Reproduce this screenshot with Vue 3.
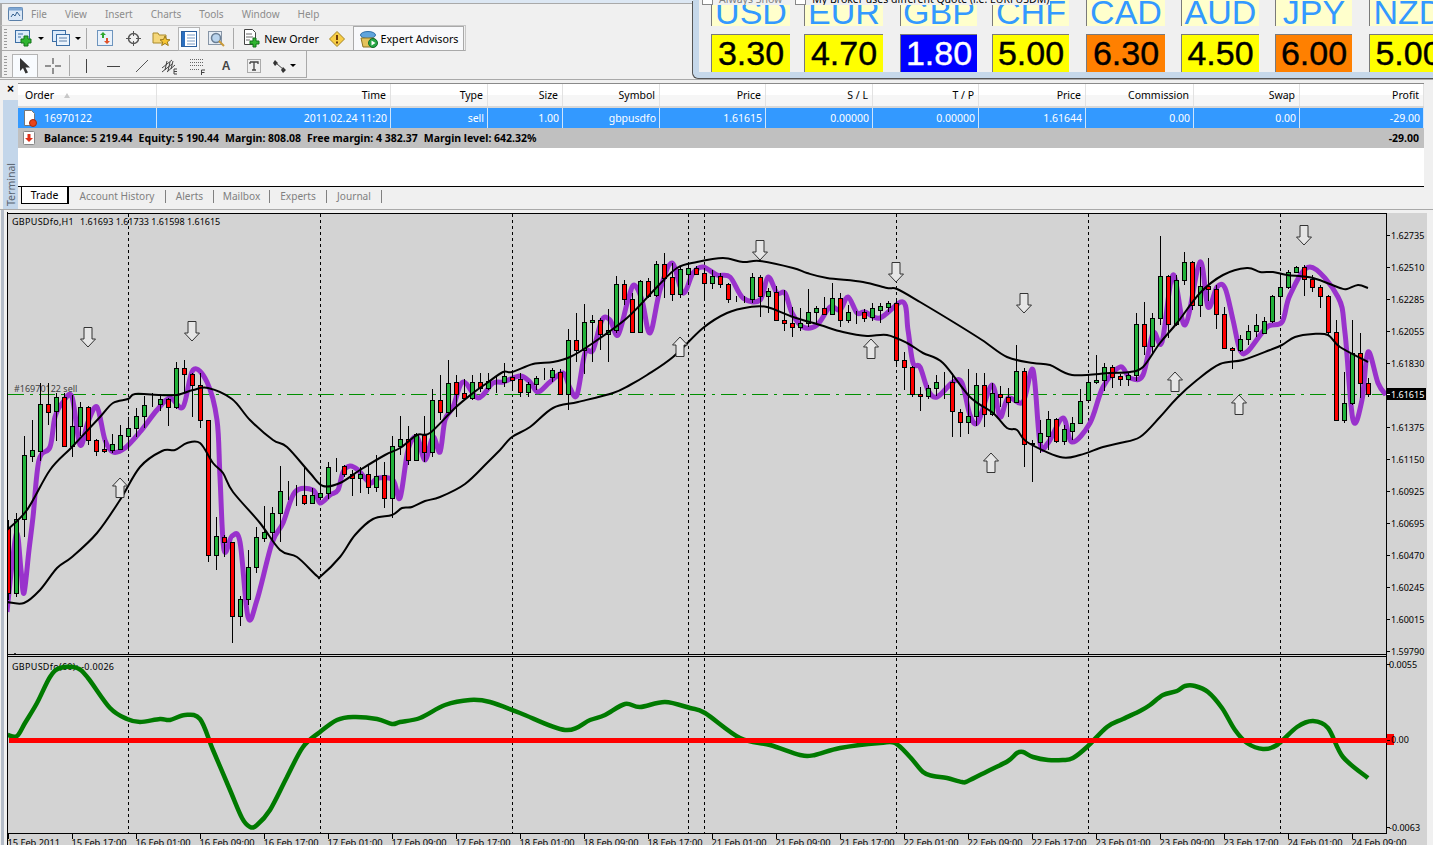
<template>
  <div class="app">
    <div class="title-strip"></div>

    <div class="menu">
      <svg class="menu-icon" width="15" height="14" viewBox="0 0 15 14">
        <rect x="0.5" y="0.5" width="14" height="13" rx="1" fill="#dbe8f6" stroke="#5a7fa8" />
        <rect x="0.5" y="0.5" width="14" height="3" fill="#7ea6d2" />
        <path d="M3 10l2-3 2 2 2-4 3 4" fill="none" stroke="#33608f" />
      </svg>
      <span v-for="m in menus" :key="m" class="menu-item">{{ m }}</span>
    </div>

    <div class="toolbar tb-main">
      <i class="grip"></i>
      <button class="tool t-new">
        <svg width="19" height="17" viewBox="0 0 19 17">
          <rect x="0.5" y="0.5" width="14" height="12" fill="#dcebfa" stroke="#3b6ea5" />
          <path d="M3 4h5M3 7h3" stroke="#3b6ea5" />
          <path d="M9 6h4v3h3v4h-3v3H9v-3H6V9h3z" fill="#2fb52f" stroke="#14731a" />
        </svg>
        <i class="caret"></i>
      </button>
      <button class="tool t-profile">
        <svg width="19" height="17" viewBox="0 0 19 17">
          <rect x="0.5" y="0.5" width="13" height="11" fill="#dcebfa" stroke="#3b6ea5" />
          <rect x="4.5" y="4.5" width="13" height="11" fill="#eaf3fc" stroke="#3b6ea5" />
          <path d="M7 8h8M7 11h8" stroke="#5a7fa8" />
        </svg>
        <i class="caret"></i>
      </button>
      <i class="sep"></i>
      <button class="tool t-icon">
        <svg width="17" height="17" viewBox="0 0 17 17">
          <rect x="0.5" y="0.5" width="15" height="15" fill="#e8f1fb" stroke="#6d94bd" />
          <path d="M6 2l3 3H7v3H5V5H3z" fill="#2fa82f" />
          <path d="M10 14l-3-3h2V8h2v3h2z" fill="#e0522a" />
        </svg>
      </button>
      <button class="tool t-icon">
        <svg width="17" height="17" viewBox="0 0 17 17">
          <circle cx="8.5" cy="8.5" r="5" fill="none" stroke="#555" stroke-width="1.5" />
          <path d="M8.5 1v5M8.5 11v5M1 8.5h5M11 8.5h5" stroke="#555" />
        </svg>
      </button>
      <button class="tool t-icon">
        <svg width="19" height="17" viewBox="0 0 19 17">
          <path d="M1 3h5l1 2h7v8H1z" fill="#f5d77a" stroke="#a98a2d" />
          <path d="M13 6l1.500 3.500 3.500.3-2.700 2.200 1 3.500-3.300-2-3.300 2 1-3.500L8 9.800l3.500-.3z" fill="#f7c531" stroke="#9a7a1c" />
        </svg>
      </button>
      <button class="tool t-icon pressed">
        <svg width="16" height="16" viewBox="0 0 16 16">
          <rect x="0.500" y="0.500" width="15" height="15" fill="#fff" stroke="#2a5f9e" />
          <rect x="1" y="1" width="3" height="14" fill="#2a6fc0" />
          <path d="M6 4h8M6 7h8M6 10h8M6 13h8" stroke="#7b9cc4" />
        </svg>
      </button>
      <button class="tool t-icon">
        <svg width="18" height="18" viewBox="0 0 18 18">
          <rect x="0.500" y="1.500" width="13" height="13" fill="#e6edf5" stroke="#8795a6" />
          <circle cx="8" cy="8" r="4.500" fill="#b9d4ee" stroke="#6a7f96" stroke-width="1.500" />
          <path d="M11 11l5 5" stroke="#c99a3a" stroke-width="2" />
        </svg>
      </button>
      <i class="sep sep-b"></i>
      <button class="tool t-order">
        <svg width="18" height="19" viewBox="0 0 18 19">
          <path d="M1.500.5h8l3 3v12h-11z" fill="#fff" stroke="#444" />
          <path d="M3 5h6M3 8h7M3 11h4" stroke="#666" />
          <path d="M10 9h3v3h3v3h-3v3h-3v-3H7v-3h3z" fill="#2fb52f" stroke="#14731a" />
        </svg>
        <span>New Order</span>
      </button>
      <button class="tool t-warn">
        <svg width="16" height="16" viewBox="0 0 16 16">
          <path d="M8 .5L15.500 8 8 15.500.5 8z" fill="#f8cd45" stroke="#a58420" stroke-linejoin="round" />
          <path d="M8 4v5" stroke="#6b3a08" stroke-width="2" />
          <path d="M8 10.500v2" stroke="#6b3a08" stroke-width="2" />
        </svg>
      </button>
      <button class="tool t-ea">
        <svg width="19" height="18" viewBox="0 0 19 18">
          <ellipse cx="9" cy="5" rx="7.500" ry="3.500" fill="#5fa4dc" stroke="#2f6fa8" />
          <path d="M2 8h13l-1 9H4z" fill="#e3c25a" stroke="#8a7424" />
          <circle cx="14" cy="13" r="4.500" fill="#27a745" stroke="#126b28" />
          <path d="M12.500 10.500l4 2.500-4 2.500z" fill="#fff" />
        </svg>
        <span>Expert Advisors</span>
      </button>
    </div>

    <div class="toolbar tb-draw">
      <i class="grip"></i>
      <button class="tool t-cursor pressed">
        <svg width="12" height="16" viewBox="0 0 12 16"><path d="M1 0v13l3-3 2.500 5.500 2.500-1L6.500 9.500H11z" fill="#333" /></svg>
      </button>
      <button class="tool t-cross">
        <svg width="16" height="16" viewBox="0 0 16 16"><path d="M8 0v6M8 10v6M0 8h6M10 8h6" stroke="#333" /></svg>
      </button>
      <i class="sep sep-draw"></i>
      <button class="tool t-line">
        <svg width="14" height="14" viewBox="0 0 14 14"><path d="M7.500 0v14" stroke="#444" /></svg>
      </button>
      <button class="tool t-line">
        <svg width="14" height="14" viewBox="0 0 14 14"><path d="M0 7.500h13" stroke="#444" /></svg>
      </button>
      <button class="tool t-line">
        <svg width="14" height="14" viewBox="0 0 14 14"><path d="M1 13L13 1" stroke="#555" /></svg>
      </button>
      <button class="tool t-line">
        <svg width="18" height="18" viewBox="0 0 18 18">
          <path d="M1 11L11 3M1 15L11 7M6 15L14 8M4 13L6 4M7 14L9 5M10 12l2-8" stroke="#444" fill="none" />
          <path d="M13 17v-5h3M13 14.500h3M13 17h3" stroke="#444" fill="none" />
        </svg>
      </button>
      <button class="tool t-line">
        <svg width="16" height="18" viewBox="0 0 16 18">
          <path d="M0 2.500h14M0 5.500h14M0 8.500h14M0 12.500h10" stroke="#666" stroke-dasharray="1 1" />
          <path d="M11.500 18v-5h3.500M11.500 15.500h3" stroke="#444" fill="none" />
        </svg>
      </button>
      <span class="tool t-a">A</span>
      <button class="tool t-line">
        <svg width="14" height="14" viewBox="0 0 14 14">
          <rect x="0.500" y="0.500" width="13" height="13" fill="none" stroke="#666" stroke-dasharray="1 1" />
          <path d="M3 3h8v2M3 3v2M7 3v8M5 11h4" stroke="#444" fill="none" stroke-width="1.300" />
        </svg>
      </button>
      <button class="tool t-more">
        <svg width="16" height="14" viewBox="0 0 16 14">
          <path d="M3 1l3 3-3 3-2-3zM11 8l3 3-3 3-2-3z" fill="#333" />
          <path d="M4 4l8 7" stroke="#444" />
        </svg>
        <i class="caret"></i>
      </button>
    </div>

    <div class="terminal">
      <div class="term-side">
        <span class="term-close">×</span>
        <span class="term-label">Terminal</span>
      </div>
      <div class="term-body">
        <div class="row head">
          <span v-for="(c, i) in headers" :key="i" class="cell" :class="{ left: i === 0 }">
            {{ c }}<i v-if="i === 0" class="sort"></i>
          </span>
        </div>
        <div class="row selected">
          <span class="cell left">
            <svg class="row-icon" width="14" height="17" viewBox="0 0 14 17">
              <path d="M1.500.5h7l3 3v12h-10z" fill="#fff" stroke="#777" />
              <circle cx="10" cy="13" r="3.500" fill="#e8431a" stroke="#a22a0c" />
            </svg>
            16970122
          </span>
          <span v-for="(c, i) in orderRow" :key="i" class="cell">{{ c }}</span>
        </div>
        <div class="row balance">
          <svg class="bal-icon" width="12" height="14" viewBox="0 0 12 14">
            <rect x="0.500" y="0.500" width="11" height="13" rx="1" fill="#fff" stroke="#888" />
            <path d="M4.500 3h3v4H10l-4 4-4-4h2.500z" fill="#e0301a" />
          </svg>
          <span class="bal-text">
            <span v-for="b in balances" :key="b">{{ b }}</span>
          </span>
          <span class="bal-profit">-29.00</span>
        </div>
        <div class="blank"></div>
        <div class="tabs">
          <span class="tab active">Trade</span>
          <span v-for="t in tabs" :key="t.label" class="tab" :style="{ width: t.w + 'px' }">{{ t.label }}</span>
        </div>
      </div>
    </div>

    <svg class="chart" viewBox="0 210 1433 635" width="1433" height="635">
      <defs>
        <clipPath id="main-clip"><rect x="8" y="214" width="1378" height="440" /></clipPath>
        <clipPath id="sub-clip"><rect x="8" y="657" width="1378" height="176" /></clipPath>
      </defs>
      <rect x="0" y="210" width="1433" height="635" fill="#f0f0f0" />
      <rect x="1" y="210" width="3" height="635" fill="#b4bcc8" />
      <rect x="8" y="213" width="1419" height="632" fill="#d3d3d3" />

      <g shape-rendering="crispEdges" stroke="#000" fill="none">
        <path d="M7.500 212v633M8 213.500h1378M1386.500 213v621M8 654.500h1378M8 656.500h1378M8 833.500h1378" />
        <path v-for="x in dividers" :key="x" :d="`M${x + 0.5} 214V833`" stroke-dasharray="3 3" />
        <path v-for="(d, i) in dates" :key="d" :d="`M${8.5 + i * 64} 834v5`" />
        <path v-for="t in priceTicks" :key="t.label" :d="`M1387 ${t.y + 0.5}h3`" />
        <path d="M1387 664.500h3M1387 827.500h3" />
      </g>

      <text x="14" y="392" class="lbl order-tag">#16970122 sell</text>
      <path class="price-line" d="M8 394.500H1386" shape-rendering="crispEdges" />

      <g clip-path="url(#main-clip)">
        <path :d="purple" fill="none" stroke="#9932cc" stroke-width="5" stroke-linejoin="round" />
        <g shape-rendering="crispEdges">
          <g v-for="(c, i) in candles" :key="i">
            <path :d="`M${8.5 + i * 8} ${c[3]}V${c[4]}`" stroke="#000" />
            <rect :x="6.500 + i * 8" :y="c[1] + 0.5" width="4" :height="c[2] - c[1]" :fill="c[0] === 'g' ? '#22b33a' : '#ff0000'" stroke="#000" />
          </g>
        </g>
        <path :d="upperBand" fill="none" stroke="#000" stroke-width="2" stroke-linejoin="round" />
        <path :d="lowerBand" fill="none" stroke="#000" stroke-width="2" stroke-linejoin="round" />
        <g v-for="a in arrows" :key="a.x" :transform="`translate(${a.x} ${a.y})${a.down ? ' scale(1 -1)' : ''}`">
          <path d="M0-10L7.500-2H4V9.500h-8V-2h-3.500z" fill="#e6e6e6" stroke="#333" />
        </g>
      </g>

      <text x="12" y="225" class="lbl chart-name">GBPUSDfo,H1</text>
      <text x="80" y="225" class="lbl">1.61693 1.61733 1.61598 1.61615</text>
      <text v-for="t in priceTicks" :key="t.label" x="1391" :y="t.y + 4" class="lbl">{{ t.label }}</text>
      <rect x="1387" y="388" width="39" height="12" fill="#000" />
      <text x="1391" y="398" class="lbl light">1.61615</text>
      <path d="M1387 394.500h3" stroke="#fff" shape-rendering="crispEdges" />

      <g clip-path="url(#sub-clip)">
        <text x="12" y="670" class="lbl chart-name">GBPUSDfo(60):  -0.0026</text>
        <path :d="oscillator" fill="none" stroke="#007a00" stroke-width="4.500" stroke-linejoin="round" />
      </g>
      <rect x="9" y="738" width="1381" height="5" fill="#ff0000" />
      <rect x="1387" y="734" width="7" height="11" fill="#ff0000" />
      <path d="M1387 740.500h3" stroke="#000" shape-rendering="crispEdges" />
      <text x="1389" y="668" class="lbl">0.0055</text>
      <text x="1391" y="743" class="lbl">0.00</text>
      <text x="1389" y="831" class="lbl">-0.0063</text>

      <text v-for="(d, i) in dates" :key="d" :x="7.500 + i * 64" y="846" class="lbl date">{{ d }}</text>
    </svg>

    <div class="fx-window">
      <div class="fx-options">
        <i class="fx-check"></i><span class="fx-opt-a">Always Show</span>
        <i class="fx-check"></i><span>My Broker uses different Quote (i.e. EURFUSDM)</span>
      </div>
      <div class="fx-grid">
        <div v-for="c in currencies" :key="c.name" class="fx-col" :style="{ width: c.w + 'px', marginRight: c.gap + 'px' }">
          <div class="fx-name">{{ c.name }}</div>
          <div class="fx-value" :class="c.tone">{{ c.value }}</div>
        </div>
      </div>
    </div>
  </div>
</template>

<script setup>
const menus = ['File', 'View', 'Insert', 'Charts', 'Tools', 'Window', 'Help']
const headers = ['Order', 'Time', 'Type', 'Size', 'Symbol', 'Price', 'S / L', 'T / P', 'Price', 'Commission', 'Swap', 'Profit']
const orderRow = ['2011.02.24 11:20', 'sell', '1.00', 'gbpusdfo', '1.61615', '0.00000', '0.00000', '1.61644', '0.00', '0.00', '-29.00']
const balances = ['Balance: 5 219.44', 'Equity: 5 190.44', 'Margin: 808.08', 'Free margin: 4 382.37', 'Margin level: 642.32%']
const tabs = [
  { label: 'Account History', w: 96 },
  { label: 'Alerts', w: 47 },
  { label: 'Mailbox', w: 55 },
  { label: 'Experts', w: 56 },
  { label: 'Journal', w: 54 }
]

const currencies = [
  { name: 'USD', value: '3.30', tone: 'yellow', w: 79, gap: 14 },
  { name: 'EUR', value: '4.70', tone: 'yellow', w: 79, gap: 17 },
  { name: 'GBP', value: '1.80', tone: 'blue', w: 77, gap: 15 },
  { name: 'CHF', value: '5.00', tone: 'yellow', w: 77, gap: 17 },
  { name: 'CAD', value: '6.30', tone: 'orange', w: 79, gap: 16 },
  { name: 'AUD', value: '4.50', tone: 'yellow', w: 78, gap: 16 },
  { name: 'JPY', value: '6.00', tone: 'orange', w: 77, gap: 17 },
  { name: 'NZD', value: '5.00', tone: 'yellow', w: 78, gap: 0 }
]

const dividers = [128, 320, 512, 688, 704, 896, 1088, 1280]

const dates = [
  '15 Feb 2011', '15 Feb 17:00', '16 Feb 01:00', '16 Feb 09:00', '16 Feb 17:00', '17 Feb 01:00',
  '17 Feb 09:00', '17 Feb 17:00', '18 Feb 01:00', '18 Feb 09:00', '18 Feb 17:00', '21 Feb 01:00',
  '21 Feb 09:00', '21 Feb 17:00', '22 Feb 01:00', '22 Feb 09:00', '22 Feb 17:00', '23 Feb 01:00',
  '23 Feb 09:00', '23 Feb 17:00', '24 Feb 01:00', '24 Feb 09:00'
]

const priceTicks = [
  { label: '1.62735', y: 235 }, { label: '1.62510', y: 267 }, { label: '1.62285', y: 299 },
  { label: '1.62055', y: 331 }, { label: '1.61830', y: 363 }, { label: '1.61375', y: 427 },
  { label: '1.61150', y: 459 }, { label: '1.60925', y: 491 }, { label: '1.60695', y: 523 },
  { label: '1.60470', y: 555 }, { label: '1.60245', y: 587 }, { label: '1.60015', y: 619 },
  { label: '1.59790', y: 651 }
]

const arrows = [
  { x: 88, y: 337, down: true }, { x: 192, y: 331, down: true }, { x: 760, y: 250, down: true },
  { x: 896, y: 272, down: true }, { x: 1024, y: 303, down: true }, { x: 1304, y: 235, down: true },
  { x: 120, y: 488 }, { x: 680, y: 347 }, { x: 871, y: 349 }, { x: 991, y: 463 },
  { x: 1175, y: 382 }, { x: 1239, y: 405 }, { x: 15, y: 663 }
]

// colour, body top, body bottom, high, low - one candle every 8px from x=8
const candles = [
  ['r',528,593,520,600],['g',519,593,513,597],['g',455,519,436,537],['g',450,456,420,462],['g',404,451,383,461],
  ['r',404,412,383,425],['g',397,411,393,441],['r',397,446,393,447],['g',426,446,395,457],['g',407,426,402,436],
  ['r',407,440,406,445],['r',440,451,439,456],['r',449,451,440,453],['g',444,450,434,453],['g',435,449,425,450],
  ['g',428,436,417,449],['g',416,428,408,437],['g',405,416,396,428],['r',404,404,393,407],['g',399,404,395,411],
  ['r',399,407,398,426],['g',368,407,362,409],['r',368,374,360,393],['r',374,385,373,417],['r',385,420,373,428],
  ['r',420,555,420,562],['g',536,555,517,570],['r',537,542,535,557],['r',542,616,542,643],['g',599,616,596,626],
  ['g',567,599,550,605],['g',537,567,527,573],['g',532,538,506,542],['g',513,532,507,540],['g',491,513,466,542],
  ['r',490,490,481,500],['r',490,490,485,506],['r',495,503,467,505],['g',495,503,488,504],['g',493,497,477,500],
  ['g',467,493,462,499],['r',467,467,458,472],['r',466,474,465,477],['r',474,478,470,496],['g',474,478,467,493],
  ['r',474,487,466,494],['g',476,487,455,492],['r',475,498,462,508],['g',446,498,436,518],['g',439,446,416,455],
  ['r',439,460,426,465],['g',434,460,433,461],['r',435,452,416,462],['g',400,452,389,457],['r',400,412,375,420],
  ['g',383,412,360,413],['r',382,394,375,417],['r',393,398,379,400],['g',382,398,375,400],['r',382,388,373,392],
  ['g',381,388,373,390],['r',382,382,375,393],['g',376,382,363,387],['r',377,380,370,389],['r',379,392,373,397],
  ['g',384,392,382,397],['g',378,384,376,390],['r',378,378,368,380],['g',370,377,368,382],['r',372,394,369,395],
  ['g',340,394,329,410],['r',340,350,313,362],['g',322,350,304,374],['g',320,322,315,362],['r',320,334,318,350],
  ['g',330,334,309,362],['g',284,330,276,333],['r',284,299,280,305],['r',299,332,293,333],['g',281,332,280,333],
  ['r',281,296,278,298],['g',264,295,261,297],['r',264,278,253,298],['r',277,294,263,301],['g',269,294,267,298],
  ['g',268,274,265,285],['r',268,274,266,275],['r',273,283,268,299],['g',276,283,270,289],['r',276,284,273,288],
  ['r',284,299,283,303],['r',299,299,296,302],['r',299,299,296,303],['g',277,299,273,303],['r',277,296,275,317],
  ['g',291,296,288,313],['r',292,320,286,320],['r',320,323,290,331],['r',323,327,307,337],['g',323,327,308,331],
  ['g',312,323,289,327],['g',308,312,306,325],['r',308,314,297,315],['g',298,314,283,315],['r',298,320,293,327],
  ['g',312,320,305,323],['r',312,312,311,324],['r',312,318,309,322],['g',308,317,303,321],['g',306,310,303,323],
  ['g',303,307,301,312],['r',303,360,301,367],['r',360,367,352,390],['r',367,394,366,397],['r',394,396,387,411],
  ['g',388,396,385,399],['g',382,388,375,396],['r',382,382,372,399],['r',382,411,373,437],['r',412,422,409,437],
  ['g',416,422,369,434],['g',385,416,373,426],['r',385,414,373,427],['g',393,414,383,416],['r',394,397,386,407],
  ['r',397,402,388,417],['g',371,402,345,403],['r',371,444,368,467],['g',443,444,440,482],['g',433,442,420,453],
  ['g',419,436,411,450],['r',419,441,418,443],['g',429,441,425,445],['g',423,431,417,440],['g',401,423,389,424],
  ['g',382,400,375,402],['g',380,382,355,384],['g',367,380,363,391],['r',367,377,365,388],['r',376,379,374,386],
  ['g',375,379,372,386],['g',324,375,313,381],['r',324,346,302,355],['g',318,346,313,355],['g',276,318,236,325],
  ['r',276,324,275,338],['g',280,324,275,326],['g',262,280,252,285],['r',262,305,261,310],['g',286,305,267,317],
  ['r',286,289,258,301],['r',289,314,285,329],['r',314,348,307,349],['r',348,350,347,369],['g',339,350,335,352],
  ['g',331,339,325,345],['g',325,331,314,337],['g',321,333,317,334],['g',296,321,295,323],['g',287,296,275,315],
  ['g',272,287,270,289],['g',267,272,266,273],['r',267,279,265,296],['r',279,287,275,292],['r',287,296,285,308],
  ['r',296,332,295,335],['r',332,420,320,421],['g',403,420,372,423],['g',353,403,320,405],['r',353,383,333,398],
  ['r',383,394,378,397]
]

// turn "x,y x,y" into a curve through the points
function smooth(str) {
  const p = str.split(' ').map((s) => s.split(',').map(Number))
  let d = `M${p[0][0]} ${p[0][1]}`
  for (let i = 0; i < p.length - 1; i++) {
    const a = p[i - 1] || p[i]
    const b = p[i]
    const c = p[i + 1]
    const e = p[i + 2] || c
    const c1 = [b[0] + (c[0] - a[0]) / 6, b[1] + (c[1] - a[1]) / 6]
    const c2 = [c[0] - (e[0] - b[0]) / 6, c[1] - (e[1] - b[1]) / 6]
    d += `C${c1[0].toFixed(1)} ${c1[1].toFixed(1)} ${c2[0].toFixed(1)} ${c2[1].toFixed(1)} ${c[0]} ${c[1]}`
  }
  return d
}

const purple = smooth('7,612 12,565 17,533 21,570 24,593 29,550 33,517 39,460 50,447 55,417 63,402 72,397 80,445 88,422 97,407 105,440 113,452 125,448 140,432 157,410 170,398 183,407 193,370 207,382 217,420 220,477 224,550 232,536 240,542 248,617 257,600 272,543 283,523 295,492 313,490 320,503 330,495 338,490 343,472 350,466 358,470 370,483 378,478 393,480 400,498 408,450 417,437 425,460 433,437 440,452 445,420 453,407 463,382 478,398 493,383 503,382 520,376 530,382 538,392 550,382 563,373 570,388 577,395 585,353 593,350 602,320 610,320 618,335 628,300 634,285 642,300 650,333 660,290 672,263 683,293 693,273 703,267 717,275 730,277 743,298 760,300 768,277 777,293 785,293 792,313 803,327 817,325 830,307 840,310 848,297 857,313 865,312 880,318 903,302 908,330 913,363 920,367 928,390 937,397 953,382 962,383 970,415 978,422 992,385 1000,417 1008,398 1023,402 1033,370 1040,443 1048,443 1063,418 1072,442 1090,423 1103,387 1120,367 1130,378 1143,375 1153,333 1162,342 1173,275 1185,325 1200,262 1208,307 1217,287 1225,288 1233,320 1240,350 1248,351 1267,327 1282,322 1290,295 1310,267 1338,297 1345,333 1353,420 1362,400 1368,352 1378,383 1386,395')

const upperBand = smooth('7,530 27,510 50,470 72,447 100,417 113,403 128,399 135,394 160,395 177,395 193,390 208,388 232,399 250,420 273,440 287,447 310,473 323,486 340,483 360,470 385,455 400,448 417,435 430,433 455,408 473,393 487,383 503,372 512,372 533,364 553,362 570,357 590,345 627,318 657,287 677,268 697,262 723,258 743,262 760,261 793,268 807,273 827,278 863,282 887,288 897,289 920,302 950,320 982,340 1007,357 1033,363 1050,365 1072,375 1110,373 1130,372 1143,367 1160,343 1177,323 1200,293 1223,275 1247,268 1260,272 1273,272 1287,275 1313,278 1340,288 1347,289 1358,285 1368,288')

const lowerBand = smooth('7,602 24,603 40,590 57,568 72,557 97,533 120,500 140,467 162,451 175,450 187,443 200,443 213,463 223,473 233,492 260,523 280,550 297,557 317,576 321,576 340,557 355,535 373,519 392,515 402,508 412,507 425,501 440,497 465,484 487,463 500,450 512,437 530,427 553,408 578,402 613,393 630,385 647,375 673,357 703,328 727,313 750,307 767,307 793,317 820,325 843,332 867,336 887,335 907,343 923,353 943,363 970,397 993,413 1007,428 1017,430 1027,442 1060,457 1080,455 1103,447 1120,443 1140,437 1160,417 1177,398 1197,380 1220,364 1243,360 1270,350 1282,345 1295,337 1313,334 1328,335 1340,347 1368,362')

const oscillator = smooth('8,735 17,736 25,723 37,703 50,677 60,668 77,668 88,678 110,708 127,719 140,722 160,719 170,720 185,715 200,719 213,750 230,790 242,818 250,827 257,825 270,810 287,777 303,747 320,732 337,720 353,717 377,719 392,724 400,722 420,718 445,705 470,700 490,702 520,713 565,730 590,720 605,715 625,704 640,707 665,702 690,708 705,713 740,738 770,745 800,755 815,755 840,748 880,743 895,743 910,757 923,772 933,776 947,778 962,782 968,781 990,770 1008,761 1017,753 1023,752 1033,757 1048,760 1063,760 1073,758 1087,747 1107,727 1123,719 1140,711 1150,705 1163,695 1177,691 1185,686 1195,686 1208,692 1222,708 1235,730 1247,743 1263,749 1277,745 1297,727 1313,721 1328,728 1343,757 1368,778')
</script>

<style>
html, body { margin: 0; background: #f0f0f0; overflow: hidden; }
</style>

<style scoped>
.app {
  position: relative;
  width: 1433px;
  height: 845px;
  overflow: hidden;
  display: flex;
  flex-direction: column;
  background: #f0f0f0;
  font-family: "Noto Sans", "Liberation Sans", sans-serif;
  font-size: 10.5px;
  color: #000;
}
.title-strip { height: 3px; background: #dce7f3; border-bottom: 1px solid #a9a9a9; flex: none; }

.menu { height: 21px; display: flex; align-items: center; padding: 0 0 2px 6px; box-sizing: border-box; flex: none; border-left: 2px solid #a9a9a9; }
.menu-icon { margin-right: 8px; }
.menu-item { color: #8c8c8c; font-size: 10px; margin-right: 18px; }

.toolbar { display: flex; align-items: center; flex: none; border-left: 2px solid #a9a9a9; box-sizing: border-box; }
.tb-main { height: 26px; width: 466px; padding-top: 1px; border-top: 1px solid #c8c8c8; border-bottom: 1px solid #a9a9a9; border-right: 1px solid #c8c8c8; }
.tb-draw { height: 27px; width: 307px; padding-top: 3px; border-right: 1px solid #a9a9a9; border-bottom: 1px solid #a9a9a9; }
.grip { width: 3px; height: 20px; margin: 0 3px 0 2px; background: repeating-linear-gradient(#9a9a9a 0 1px, transparent 1px 3px); flex: none; }
.sep { width: 1px; height: 21px; background: #a9a9a9; margin: 0 4px; flex: none; }
.sep-b { margin: 0 6px 0 2px; }
.sep-draw { margin: 0 2px 0 4px; }
.tool {
  height: 24px;
  padding: 0;
  border: 0;
  background: none;
  display: flex;
  align-items: center;
  justify-content: center;
  font: inherit;
  color: #000;
  flex: none;
  box-sizing: border-box;
}
.caret { width: 0; height: 0; border: 3px solid transparent; border-top: 3px solid #000; border-bottom: 0; margin-left: 4px; }
.t-new { width: 32px; margin-left: 3px; }
.t-profile { width: 32px; margin-left: 5px; }
.t-icon { width: 22px; margin: 0 3px; }
.pressed { background: #f8fbfe; border: 1px solid #b4b4b4; }
.t-order { gap: 3px; width: 82px; font-size: 10.7px; }
.t-warn { width: 22px; margin: 0 5px 0 4px; }
.t-ea { width: 111px; height: 25px; gap: 3px; border: 1px solid #a9a9a9; background: #f8f9fb; font-size: 10.7px; }
.t-cursor { width: 26px; margin-left: 2px; }
.t-cross { width: 24px; margin-left: 3px; }
.t-line { width: 28px; }
.t-a { width: 22px; font: bold 12px "Liberation Sans", sans-serif; color: #444; margin: 0 3px 0 3px; }
.t-more { width: 32px; }
.t-more .caret { margin-left: 2px; }

.terminal { height: 131px; flex: none; margin-top: 1px; display: flex; padding-top: 3px; box-sizing: border-box; border-top: 1px solid #a9a9a9; border-bottom: 1px solid #a9a9a9; }
.term-side { width: 15px; margin-left: 3px; background: #c3d6ea; display: flex; flex-direction: column; justify-content: space-between; align-items: center; flex: none; }
.term-close { width: 100%; height: 17px; background: #f0f0f0; font: bold 12px "Liberation Sans", sans-serif; text-align: center; line-height: 13px; }
.term-label { writing-mode: vertical-rl; transform: rotate(180deg); font-size: 10.5px; color: #5a6470; padding-top: 3px; }
.term-body { width: 1406px; background: #fff; display: flex; flex-direction: column; border-top: 1px solid #8a8a8a; }

.row { display: grid; grid-template-columns: 139px 234px 97px 75px 97px 106px 107px 106px 107px 108px 106px 124px; flex: none; }
.head { height: 22px; border-bottom: 2px solid #d8d8d8; background: linear-gradient(#fff 0 50%, #f6f6f6 50%); box-sizing: content-box; }
.cell { display: flex; align-items: center; justify-content: flex-end; padding-right: 4px; border-right: 1px solid #e2e2e2; white-space: nowrap; position: relative; }
.cell.left { justify-content: flex-start; padding-left: 7px; }
.sort { width: 0; height: 0; border: 3px solid transparent; border-bottom: 5px solid #c8c8c8; border-top: 0; margin-left: 10px; }
.selected { height: 20px; background: #3399ff; color: #fff; }
.selected .cell { border-right-color: #cfe5fb; padding-right: 3px; }
.selected .cell.left { padding-left: 5px; gap: 7px; }
.balance { height: 20px; background: #c0c0c0; display: flex; align-items: center; font-weight: 700; position: relative; }
.bal-icon { margin-left: 5px; flex: none; }
.bal-text { margin-left: 9px; display: flex; gap: 6px; white-space: nowrap; }
.bal-profit { margin-left: auto; padding-right: 5px; }
.blank { height: 38px; flex: none; }
.tabs { flex: 1; display: flex; align-items: flex-start; background: #f0f0f0; border-top: 1px solid #000; padding-left: 3px; color: #808080; font-size: 10.1px; }
.tab { height: 13px; line-height: 13px; text-align: center; flex: none; border-right: 1px solid #808080; margin-top: 3px; }
.tab.active { height: 17px; margin: 0 0 0 0; width: 48px; text-align: center; box-sizing: border-box; background: #fff; color: #000; font-size: 10.5px; border: solid #000; border-width: 0 2px 1px 1px; line-height: 16px; }

.chart { display: block; flex: none; }
.lbl { font-family: "Noto Sans", "Liberation Sans", sans-serif; font-size: 9px; fill: #000; white-space: pre; }
.lbl.light { fill: #fff; }
.lbl.date { font-size: 9.3px; }
.chart-name { letter-spacing: 0.3px; }
.order-tag { fill: #444; }
.price-line { stroke: #008f00; stroke-width: 1; stroke-dasharray: 16 6 3 6; fill: none; }

.fx-window {
  position: absolute;
  left: 693px;
  top: 0;
  width: 750px;
  height: 78px;
  box-sizing: border-box;
  background: #f0f0f0;
  border: solid #c6d8ea;
  border-width: 0 0 6px 6px;
  border-bottom-left-radius: 6px;
  box-shadow: -1px 1px 0 #555;
  overflow: hidden;
}
.fx-options {
  position: absolute;
  left: 0;
  top: 0;
  width: 351px;
  height: 5px;
  z-index: 2;
  overflow: hidden;
  background: #f0f0f0;
  display: flex;
  align-items: flex-end;
  font-size: 10.5px;
  line-height: 5px;
  padding-left: 3px;
  box-sizing: border-box;
  white-space: nowrap;
}
.fx-options span { position: relative; top: -3px; }
.fx-check { width: 9px; height: 8px; border: 1px solid #888; background: #fff; flex: none; margin-right: 6px; margin-top: -5px; }
.fx-opt-a { color: #808080; margin-right: 13px; }
.fx-grid { display: flex; padding-left: 12px; }
.fx-col { flex: none; display: flex; flex-direction: column; gap: 8px; }
.fx-name, .fx-value {
  box-sizing: border-box;
  border-top: 1px solid #7a7a7a;
  border-left: 1px solid #7a7a7a;
  text-align: center;
  font-family: "Liberation Sans", sans-serif;
  font-size: 34px;
  overflow: hidden;
  white-space: nowrap;
}
.fx-name { height: 26px; background: #ffffcc; color: #3399ff; line-height: 24px; border-top: 0; }
.fx-value { height: 38px; line-height: 36px; color: #000; -webkit-text-stroke: 0.4px currentColor; }
.yellow { background: #ffff00; }
.blue { background: #0000ff; color: #fff; }
.orange { background: #ff8000; }
</style>
